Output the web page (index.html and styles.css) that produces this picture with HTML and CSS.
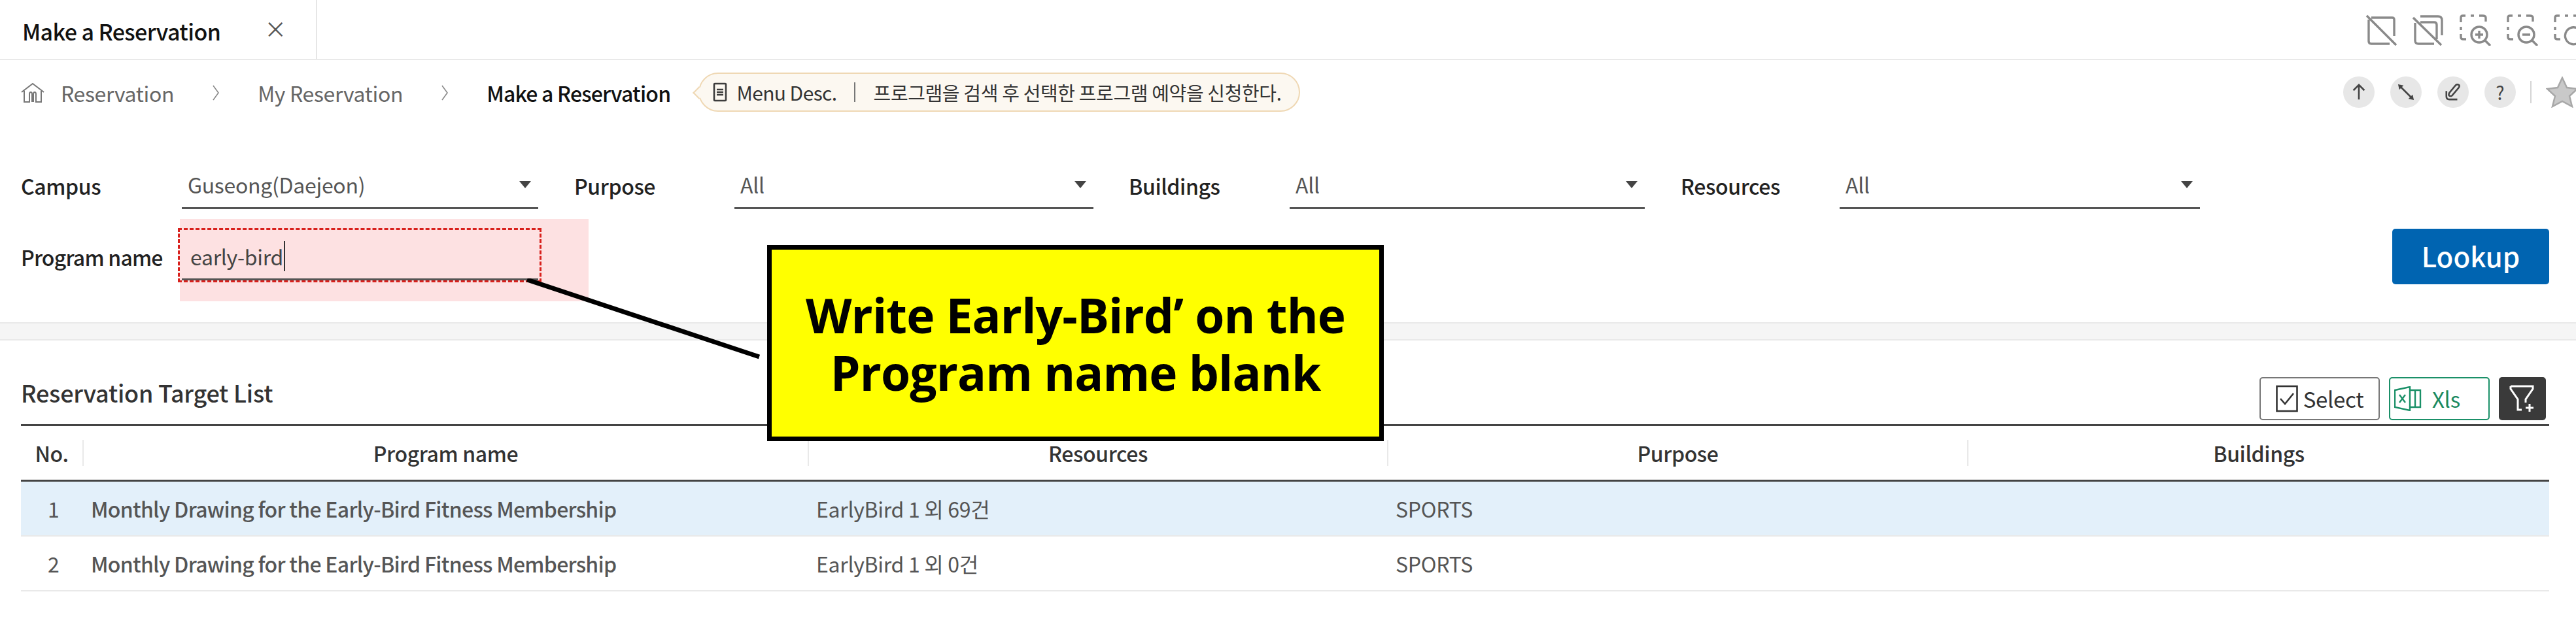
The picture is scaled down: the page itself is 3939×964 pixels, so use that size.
FILE: index.html
```html
<!DOCTYPE html>
<html lang="en">
<head>
<meta charset="utf-8">
<title>Make a Reservation</title>
<link rel="stylesheet" href="styles.css">
</head>
<body>
<div class="page">
  <header class="tabbar">
    <div class="tab"><span class="tab-title">Make a Reservation</span><span class="tab-close">×</span></div>
    <div class="view-tools">
      <svg class="vt" viewBox="0 0 48 48"><path d="M9 5H41Q44 5 44 8V33M37 45H9Q5 45 5 41V8M2 2L47 47"/></svg>
      <svg class="vt" viewBox="0 0 48 48"><path d="M12 3H39Q45 3 45 9V32M12 12H33Q37 12 37 16V38M33 45H9Q4 45 4 40V13M1 5L44 47"/></svg>
      <svg class="vt" viewBox="0 0 48 48"><path d="M2 12V5Q2 2 5 2H9M17 2H22M30 2H35Q40 2 40 5V11M2 19V24M2 30V35Q2 38 6 38H10"/><circle cx="30" cy="31" r="12"/><path d="M39 40L47 48M24 31H36M30 25V37"/></svg>
      <svg class="vt" viewBox="0 0 48 48"><path d="M2 12V5Q2 2 5 2H9M17 2H22M30 2H35Q40 2 40 5V11M2 19V24M2 30V35Q2 38 6 38H10"/><circle cx="30" cy="31" r="12"/><path d="M39 40L47 48M24 31H36"/></svg>
      <svg class="vt" viewBox="0 0 48 48"><path d="M2 12V5Q2 2 5 2H9M17 2H22M30 2H35Q40 2 40 5V11M2 19V24M2 30V35Q2 38 6 38H10"/><path d="M40 24A13 13 0 1 0 43 36"/></svg>
    </div>
  </header>

  <nav class="crumbbar">
    <svg class="home" viewBox="0 0 36 30"><path d="M1 14L18 1L35 14M5 12V29H13V17Q13 14 15 14Q17 14 17 17V29M19 29V17Q19 14 21 14Q23 14 23 17V29H31V12"/></svg>
    <span class="crumb">Reservation</span>
    <svg class="chev" viewBox="0 0 10 24"><path d="M1 1L9 12L1 23"/></svg>
    <span class="crumb">My Reservation</span>
    <svg class="chev" viewBox="0 0 10 24"><path d="M1 1L9 12L1 23"/></svg>
    <span class="crumb crumb-now">Make a Reservation</span>
    <div class="bubble">
      <svg class="doc" viewBox="0 0 22 30"><rect x="2" y="2" width="18" height="26" rx="1"/><path d="M6 11H16M6 15H16M6 19H16"/></svg>
      <span class="bubble-name">Menu Desc.</span>
      <span class="bubble-sep"></span>
      <span class="bubble-text">프로그램을 검색 후 선택한 프로그램 예약을 신청한다.</span>
    </div>
    <div class="crumb-tools">
      <span class="round"><svg viewBox="0 0 24 28"><path d="M12 26V3M3 11L12 2L21 11"/></svg></span>
      <span class="round"><svg viewBox="0 0 28 28"><path d="M4 4L24 24"/><path class="fill" d="M1 1L10 3L3 10ZM27 27L18 25L25 18Z"/></svg></span>
      <span class="round"><svg viewBox="0 0 28 28"><path d="M12 20L23 7Q26 3 23 2Q20 0 17 4L8 15Q6 19 8 20Q10 21 12 20M3 12V21Q3 26 8 26H21"/></svg></span>
      <span class="round round-q">?</span>
      <span class="tool-sep"></span>
      <svg class="star" viewBox="0 0 50 48"><path d="M25 2L32 17L48 19L36 30L40 46L25 38L10 46L14 30L2 19L18 17Z"/></svg>
    </div>
  </nav>

  <section class="filters">
    <div class="filter-row">
      <label class="flabel flabel-campus">Campus</label>
      <div class="select sel-a"><span>Guseong(Daejeon)</span><i class="caret"></i></div>
      <label class="flabel flabel-purpose">Purpose</label>
      <div class="select sel-b"><span>All</span><i class="caret"></i></div>
      <label class="flabel flabel-build">Buildings</label>
      <div class="select sel-c"><span>All</span><i class="caret"></i></div>
      <label class="flabel flabel-res">Resources</label>
      <div class="select sel-d"><span>All</span><i class="caret"></i></div>
    </div>
    <div class="filter-row filter-row-2">
      <label class="flabel flabel-campus flabel-prog">Program name</label>
      <div class="select sel-a sel-input"><span class="typed">early-bird</span><i class="text-caret"></i></div>
      <button class="lookup">Lookup</button>
    </div>
  </section>

  <div class="band"></div>

  <section class="list">
    <div class="list-head">
      <h2 class="list-title">Reservation Target List</h2>
      <div class="list-actions">
        <button class="btn btn-select">
          <svg class="ico-check" viewBox="0 0 34 42"><rect x="1.5" y="2" width="31" height="38"/><path d="M7 21L14 29L27 13"/></svg>Select
        </button>
        <button class="btn btn-xls">
          <svg class="ico-xls" viewBox="0 0 42 38"><path d="M1 6L24 1V37L1 32ZM24 6H40V32H24M32 6V32"/><path d="M8 13L17 25M17 13L8 25"/></svg>Xls
        </button>
        <button class="btn btn-filter">
          <svg class="ico-filter" viewBox="0 0 40 42"><path d="M2 2H36V6L25 22V27M2 2V6L13 22V38H19M31 29V41M25 35H37"/></svg>
        </button>
      </div>
    </div>
    <div class="grid grid-head">
      <div class="th">No.</div>
      <div class="th">Program name</div>
      <div class="th">Resources</div>
      <div class="th">Purpose</div>
      <div class="th">Buildings</div>
    </div>
    <div class="grid row row-on">
      <div class="td td-no">1</div>
      <div class="td">Monthly Drawing for the Early-Bird Fitness Membership</div>
      <div class="td">EarlyBird 1 외 69건</div>
      <div class="td">SPORTS</div>
      <div class="td"></div>
    </div>
    <div class="grid row">
      <div class="td td-no">2</div>
      <div class="td">Monthly Drawing for the Early-Bird Fitness Membership</div>
      <div class="td">EarlyBird 1 외 0건</div>
      <div class="td">SPORTS</div>
      <div class="td"></div>
    </div>
  </section>

  <div class="hl-pink"></div>
  <div class="hl-dash"></div>
  <svg class="pointer" viewBox="0 0 370 130"><path d="M2 2L357 120"/></svg>
  <div class="callout">Write Early-Bird’ on the<br>Program name blank</div>
</div>
</body>
</html>
```

FILE: styles.css
```css
* { box-sizing: border-box; }
html, body { margin: 0; padding: 0; background: #fff; }
body { font-family: "Noto Sans CJK KR", "Noto Sans", sans-serif; color: #333; overflow: hidden; }
.page { position: relative; width: 3939px; height: 964px; overflow: hidden; }

.tabbar { height: 92px; border-bottom: 2px solid #e9e9e9; display: flex; justify-content: space-between; }
.tab { width: 485px; height: 90px; padding: 5px 0 0 34px; border-right: 2px solid #e6e6e6; display: flex; align-items: center; }
.tab-title { font-size: 34px; font-weight: 500; color: #111; letter-spacing: -0.6px; }
.tab-close { margin-left: 67px; font-size: 34px; color: #555; line-height: 1; margin-top: -8px; }
.view-tools { display: flex; gap: 24px; padding: 22px 0 0 0; margin-right: -14px; }
.vt { width: 48px; height: 48px; fill: none; stroke: #8a8a8a; stroke-width: 3.4; }

.crumbbar { height: 100px; display: flex; align-items: center; padding-left: 32px; position: relative; }
.home { width: 36px; height: 30px; fill: none; stroke: #777; stroke-width: 2; margin-right: 25px; }
.crumb { font-size: 32px; color: #666; letter-spacing: -0.35px; }
.crumb-now { color: #111; font-weight: 500; letter-spacing: -0.8px; }
.chev { width: 10px; height: 24px; fill: none; stroke: #888; stroke-width: 1.6; margin: 0 59px; }
.bubble { position: relative; margin-left: 43px; height: 60px; width: 920px; border: 2px solid #efd8b4; border-radius: 30px; background: #fcf8f1; display: flex; align-items: center; padding-left: 20px; color: #333; font-size: 29px; margin-top: -2px; }
.bubble::before { content: ""; position: absolute; left: -8px; top: 22px; width: 12px; height: 12px; background: #fcf8f1; border-left: 2px solid #efd8b4; border-bottom: 2px solid #efd8b4; transform: rotate(45deg); }
.doc { width: 22px; height: 30px; fill: none; stroke: #3d3d3d; stroke-width: 2.6; margin-right: 14px; }
.bubble-name { font-size: 30px; letter-spacing: -0.6px; }
.bubble-sep { width: 2px; height: 30px; background: #777; margin: 0 28px 0 26px; }
.bubble-text { font-size: 29px; letter-spacing: -0.35px; }
.crumb-tools { position: absolute; left: 3583px; top: 25px; display: flex; align-items: center; gap: 24px; }
.round { width: 48px; height: 48px; border-radius: 50%; background: #e7e7e7; display: flex; align-items: center; justify-content: center; color: #444; font-size: 28px; }
.round svg { width: 26px; height: 26px; fill: none; stroke: #444; stroke-width: 2.8; }
.round svg .fill { fill: #444; stroke: none; }
.tool-sep { width: 2px; height: 34px; background: #d5d5d5; margin-left: -2px; }
.star { width: 50px; height: 48px; fill: #c9c9c9; stroke: #a8a8a8; stroke-width: 2.5; margin-left: -2px; }

.filters { height: 301px; padding: 60px 41px 0 32px; }
.filter-row { display: flex; align-items: center; height: 68px; }
.filter-row-2 { margin-top: 41px; }
.flabel { font-size: 32px; font-weight: 500; color: #222; letter-spacing: -0.4px; padding-bottom: 5px; }
.flabel-prog { letter-spacing: -0.8px; }
.flabel-campus { width: 246px; flex: none; }
.flabel-purpose { width: 245px; margin-left: 55px; }
.flabel-build { width: 246px; margin-left: 54px; }
.flabel-res { width: 243px; margin-left: 55px; }
.select { height: 68px; border-bottom: 3px solid #555; display: flex; align-items: center; justify-content: space-between; padding: 0 11px 5px 9px; font-size: 32px; color: #555; letter-spacing: -0.3px; flex: none; }
.sel-a { width: 545px; }
.sel-b { width: 549px; }
.sel-c { width: 543px; }
.sel-d { width: 551px; }
.caret { width: 0; height: 0; border-left: 9px solid transparent; border-right: 9px solid transparent; border-top: 11px solid #444; margin-top: 0; }
.sel-input { justify-content: flex-start; padding: 0 0 3px 13px; position: relative; z-index: 2; }
.typed { color: #444; }
.text-caret { width: 2px; height: 46px; background: #333; margin-left: 1px; }
.lookup { margin-left: auto; width: 240px; height: 85px; border: 0; border-radius: 5px; background: #0064b1; color: #fff; font: 500 42px "Noto Sans CJK KR", sans-serif; margin-top: -6px; padding-bottom: 4px; }

.band { height: 28px; background: #f5f5f5; border-top: 2px solid #e9e9e9; border-bottom: 2px solid #e9e9e9; }

.list { padding: 0 41px 0 32px; }
.list-head { height: 131px; border-bottom: 3px solid #444; display: flex; justify-content: space-between; align-items: flex-end; padding-bottom: 6px; }
.list-title { margin: 0 0 17px 0; font-size: 36px; font-weight: 500; color: #333; letter-spacing: -0.25px; }
.list-actions { display: flex; gap: 14px; margin-right: 5px; }
.btn { height: 66px; background: #fff; border-radius: 5px; display: flex; align-items: center; justify-content: center; font: 400 33px "Noto Sans CJK KR", sans-serif; padding: 0; letter-spacing: -0.3px; }
.btn-select { width: 184px; border: 2px solid #777; color: #333; }
.btn-xls { width: 154px; border: 2px solid #1a9068; color: #1a8a60; justify-content: flex-start; padding-left: 6px; }
.btn-filter { width: 72px; background: #3a3a3a; border: 0; }
.ico-check { width: 34px; height: 42px; fill: none; stroke: #333; stroke-width: 2.6; margin-right: 8px; }
.ico-xls { width: 42px; height: 38px; fill: none; stroke: #1a9068; stroke-width: 2.4; margin-right: 16px; }
.ico-filter { width: 40px; height: 42px; fill: none; stroke: #fff; stroke-width: 3; }

.grid { display: grid; grid-template-columns: 94px 1109px 886px 887px 890px; }
.grid-head { height: 85px; border-bottom: 3px solid #444; align-items: center; }
.th { height: 40px; display: flex; align-items: center; justify-content: center; font-size: 32px; font-weight: 500; color: #333; border-left: 2px solid #e9e9e9; letter-spacing: -0.4px; margin-top: -1px; }
.th:first-child { border-left: 0; }
.row { height: 84px; border-bottom: 2px solid #e9e9e9; align-items: center; }
.row-on { background: #e3f0fa; }
.td { padding-left: 13px; font-size: 32px; font-weight: 500; color: #555; letter-spacing: -0.73px; white-space: nowrap; }
.td:nth-child(n+3) { font-weight: 400; letter-spacing: -0.3px; }
.td-no { padding-left: 5px; text-align: center; font-weight: 400; }

.hl-pink { position: absolute; left: 275px; top: 335px; width: 625px; height: 126px; background: #fde1e2; }
.hl-dash { position: absolute; left: 272px; top: 349px; width: 556px; height: 83px; border: 3px dashed #d8201c; z-index: 3; }
.pointer { position: absolute; left: 804px; top: 426px; width: 370px; height: 130px; fill: none; stroke: #000; stroke-width: 7; z-index: 3; }
.callout { position: absolute; left: 1173px; top: 375px; width: 943px; height: 300px; background: #ffff00; border: 7px solid #000; display: flex; align-items: center; justify-content: center; text-align: center; font: 700 73px/88px "Open Sans", sans-serif; letter-spacing: -0.85px; color: #000; z-index: 4; padding-top: 2px; }
```
